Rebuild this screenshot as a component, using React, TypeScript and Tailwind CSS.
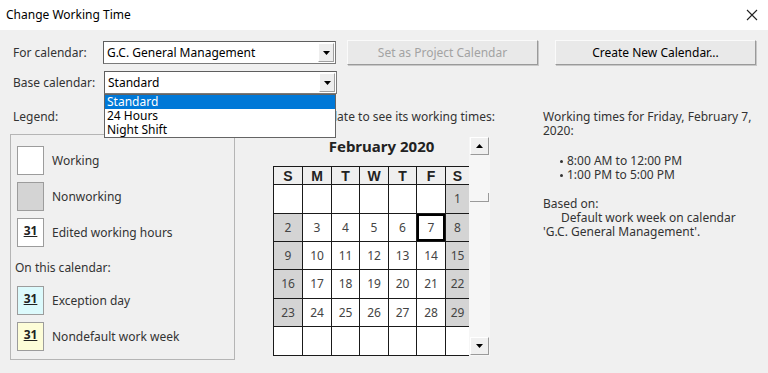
import React from "react";

// ------------------------------------------------------------ SMALL PARTS
const Tri = ({ dir = "down" }: { dir?: "up" | "down" }) => (
  <svg width="7" height="4" viewBox="0 0 7 4">
    <path d={dir === "down" ? "M0 0h7L3.5 4z" : "M0 4h7L3.5 0z"} fill="#000" />
  </svg>
);

const Combo = ({ value }: { value: string }) => (
  <div className="flex h-[23px] w-[233px] items-stretch border border-[#7a7a7a] border-t-[#5e5e5e] border-l-[#5e5e5e] bg-white">
    <div className="flex flex-1 items-center pl-[3px] text-[12px] text-black">{value}</div>
    <div className="m-[1px] flex w-[16px] items-center justify-center border border-t-white border-l-white border-r-[#a0a0a0] border-b-[#a0a0a0] bg-[#eeeeee]">
      <Tri />
    </div>
  </div>
);

const Button = ({ title, disabled }: { title: string; disabled?: boolean }) => (
  <div
    className={`flex h-[25px] items-center justify-center border border-t-[#fafafa] border-l-[#fafafa] border-r-[#9a9a9a] border-b-[#9a9a9a] bg-[#e9e9e9] text-[12px] shadow-[1px_1px_0_#c8c8c8] ${
      disabled ? "text-[#a3a3a3]" : "text-black"
    }`}
  >
    {title}
  </div>
);

const Swatch = ({ bg, num }: { bg: string; num?: boolean }) => (
  <div className={`flex h-[29px] w-[27px] shrink-0 justify-center border border-[#9c9c9c] pt-[5px] ${bg}`}>
    {num && <span className="text-[12px] font-bold leading-[14px] text-[#222] underline">31</span>}
  </div>
);

const LegendRow = ({ bg, num, label }: { bg: string; num?: boolean; label: string }) => (
  <div className="flex items-center gap-[8px]">
    <Swatch bg={bg} num={num} />
    <span className="text-[12px] text-[#333]">{label}</span>
  </div>
);

const ScrollBtn = ({ dir }: { dir: "up" | "down" }) => (
  <div className="mx-[1px] flex h-[18px] items-center justify-center border border-t-white border-l-white border-r-[#9a9a9a] border-b-[#9a9a9a] bg-[#f0f0f0]">
    <Tri dir={dir} />
  </div>
);

// ------------------------------------------------------------ CALENDAR DATA
const cols = ["w-[29px]", "w-[29px]", "w-[28px]", "w-[29px]", "w-[28px]", "w-[29px]", "w-[24px]"];
const rowH = ["h-[29px]", "h-[28px]", "h-[28px]", "h-[29px]", "h-[28px]", "h-[29px]"];
const days = ["S", "M", "T", "W", "T", "F", "S"];
const weeks: (number | null)[][] = [
  [null, null, null, null, null, null, 1],
  [2, 3, 4, 5, 6, 7, 8],
  [9, 10, 11, 12, 13, 14, 15],
  [16, 17, 18, 19, 20, 21, 22],
  [23, 24, 25, 26, 27, 28, 29],
  [null, null, null, null, null, null, null],
];

const Calendar = () => (
  <div className="flex w-[217px]">
    <div className="w-[196px]">
      <div className="mb-[11px] flex h-[18px] w-[217px] items-center justify-center text-[15px] font-bold leading-[18px] text-[#222]">
        February 2020
      </div>
      <div className="border-b border-[#1a1a1a] font-['Liberation_Sans',sans-serif]">
        <div className="flex h-[18px]">
          {days.map((d, i) => (
            <div
              key={i}
              className={`${cols[i]} flex items-center justify-center border-t border-l border-[#1a1a1a] bg-[#efefef] text-[14px] font-bold leading-[16px] text-[#222]`}
            >
              {d}
            </div>
          ))}
        </div>
        {weeks.map((w, r) => (
          <div key={r} className={`flex ${rowH[r]}`}>
            {w.map((n, i) => {
              const weekend = n !== null && (i === 0 || i === 6);
              const selected = n === 7;
              return (
                <div
                  key={i}
                  className={`${cols[i]} flex items-center justify-center border-t border-l border-[#1a1a1a] font-['Noto_Sans',sans-serif] text-[12px] text-[#444] ${
                    weekend ? "bg-[#d4d4d4]" : "bg-white"
                  } ${selected ? "shadow-[inset_0_0_0_2px_#000]" : ""}`}
                >
                  {n ?? ""}
                </div>
              );
            })}
          </div>
        ))}
      </div>
    </div>
    <div className="flex w-[21px] flex-col bg-[#f6f6f6] pb-[1px]">
      <ScrollBtn dir="up" />
      <div className="mx-[1px] mt-[38px] h-[9px] border-r border-b border-[#9a9a9a]" />
      <div className="flex-1" />
      <ScrollBtn dir="down" />
    </div>
  </div>
);

const bullet =
  "relative before:absolute before:top-[6px] before:left-[-7px] before:h-[3px] before:w-[3px] before:rounded-full before:bg-[#333]";

// ------------------------------------------------------------ APP
export default function App() {
  return (
    <div className="h-[373px] w-[768px] overflow-hidden bg-[#f0f0f0] font-['Noto_Sans',sans-serif] text-[12px] leading-[14px] text-[#333]">
      {/* title bar */}
      <div className="flex h-[30px] items-center justify-between bg-white pr-[10px] pl-[6px]">
        <span className="text-[12px] text-black">Change Working Time</span>
        <svg width="12" height="12" viewBox="0 0 12 12">
          <path d="M1 1l10 10M11 1L1 11" stroke="#222" strokeWidth="1.1" />
        </svg>
      </div>

      <div className="pt-[10px] pl-[13px]">
        {/* row 1 */}
        <div className="flex h-[25px] items-center">
          <span className="w-[90px]">For calendar:</span>
          <Combo value="G.C. General Management" />
          <div className="ml-[11px] w-[191px]">
            <Button title="Set as Project Calendar" disabled />
          </div>
          <div className="ml-[17px] w-[201px]">
            <Button title="Create New Calendar..." />
          </div>
        </div>

        {/* row 2 */}
        <div className="mt-[5px] flex h-[25px] items-center">
          <span className="w-[91px]">Base calendar:</span>
          <div className="relative z-10">
            <Combo value="Standard" />
            <div className="absolute top-[23px] left-0 w-[232px] border border-[#646464] bg-white text-[12px] text-black">
              <div className="h-[14px] bg-[#0078d7] pl-[2px] leading-[14px] text-white">Standard</div>
              <div className="h-[14px] pl-[2px] leading-[14px]">24 Hours</div>
              <div className="h-[14px] pl-[2px] leading-[14px]">Night Shift</div>
            </div>
          </div>
        </div>

        {/* main */}
        <div className="flex items-start pt-[15px]">
          <div className="ml-[-3px] w-[225px] shrink-0">
            <div className="pl-[3px]">Legend:</div>
            <div className="mt-[10px] flex h-[226px] flex-col border border-[#b5b5b5] pt-[11px] pl-[6px]">
              <div className="flex flex-col gap-[7px]">
                <LegendRow bg="bg-white" label="Working" />
                <LegendRow bg="bg-[#d4d4d4]" label="Nonworking" />
                <LegendRow bg="bg-white" num label="Edited working hours" />
              </div>
              <div className="mt-[14px] ml-[-2px]">On this calendar:</div>
              <div className="mt-[11px] flex flex-col gap-[7px]">
                <LegendRow bg="bg-[#dcfafc]" num label="Exception day" />
                <LegendRow bg="bg-[#fdfdd8]" num label="Nondefault work week" />
              </div>
            </div>
          </div>

          <div className="ml-[38px] w-[217px] shrink-0">
            <div className="whitespace-nowrap">Click on a date to see its working times:</div>
            <div className="mt-[13px]">
              <Calendar />
            </div>
          </div>

          <div className="ml-[53px] shrink-0">
            <div>
              Working times for Friday, February 7,
              <br />
              2020:
            </div>
            <ul className="mt-[16px] pl-[24px]">
              <li className={bullet}>8:00 AM to 12:00 PM</li>
              <li className={bullet}>1:00 PM to 5:00 PM</li>
            </ul>
            <div className="mt-[15px]">Based on:</div>
            <div className="pl-[18px]">Default work week on calendar</div>
            <div>'G.C. General Management'.</div>
          </div>
        </div>
      </div>
    </div>
  );
}
